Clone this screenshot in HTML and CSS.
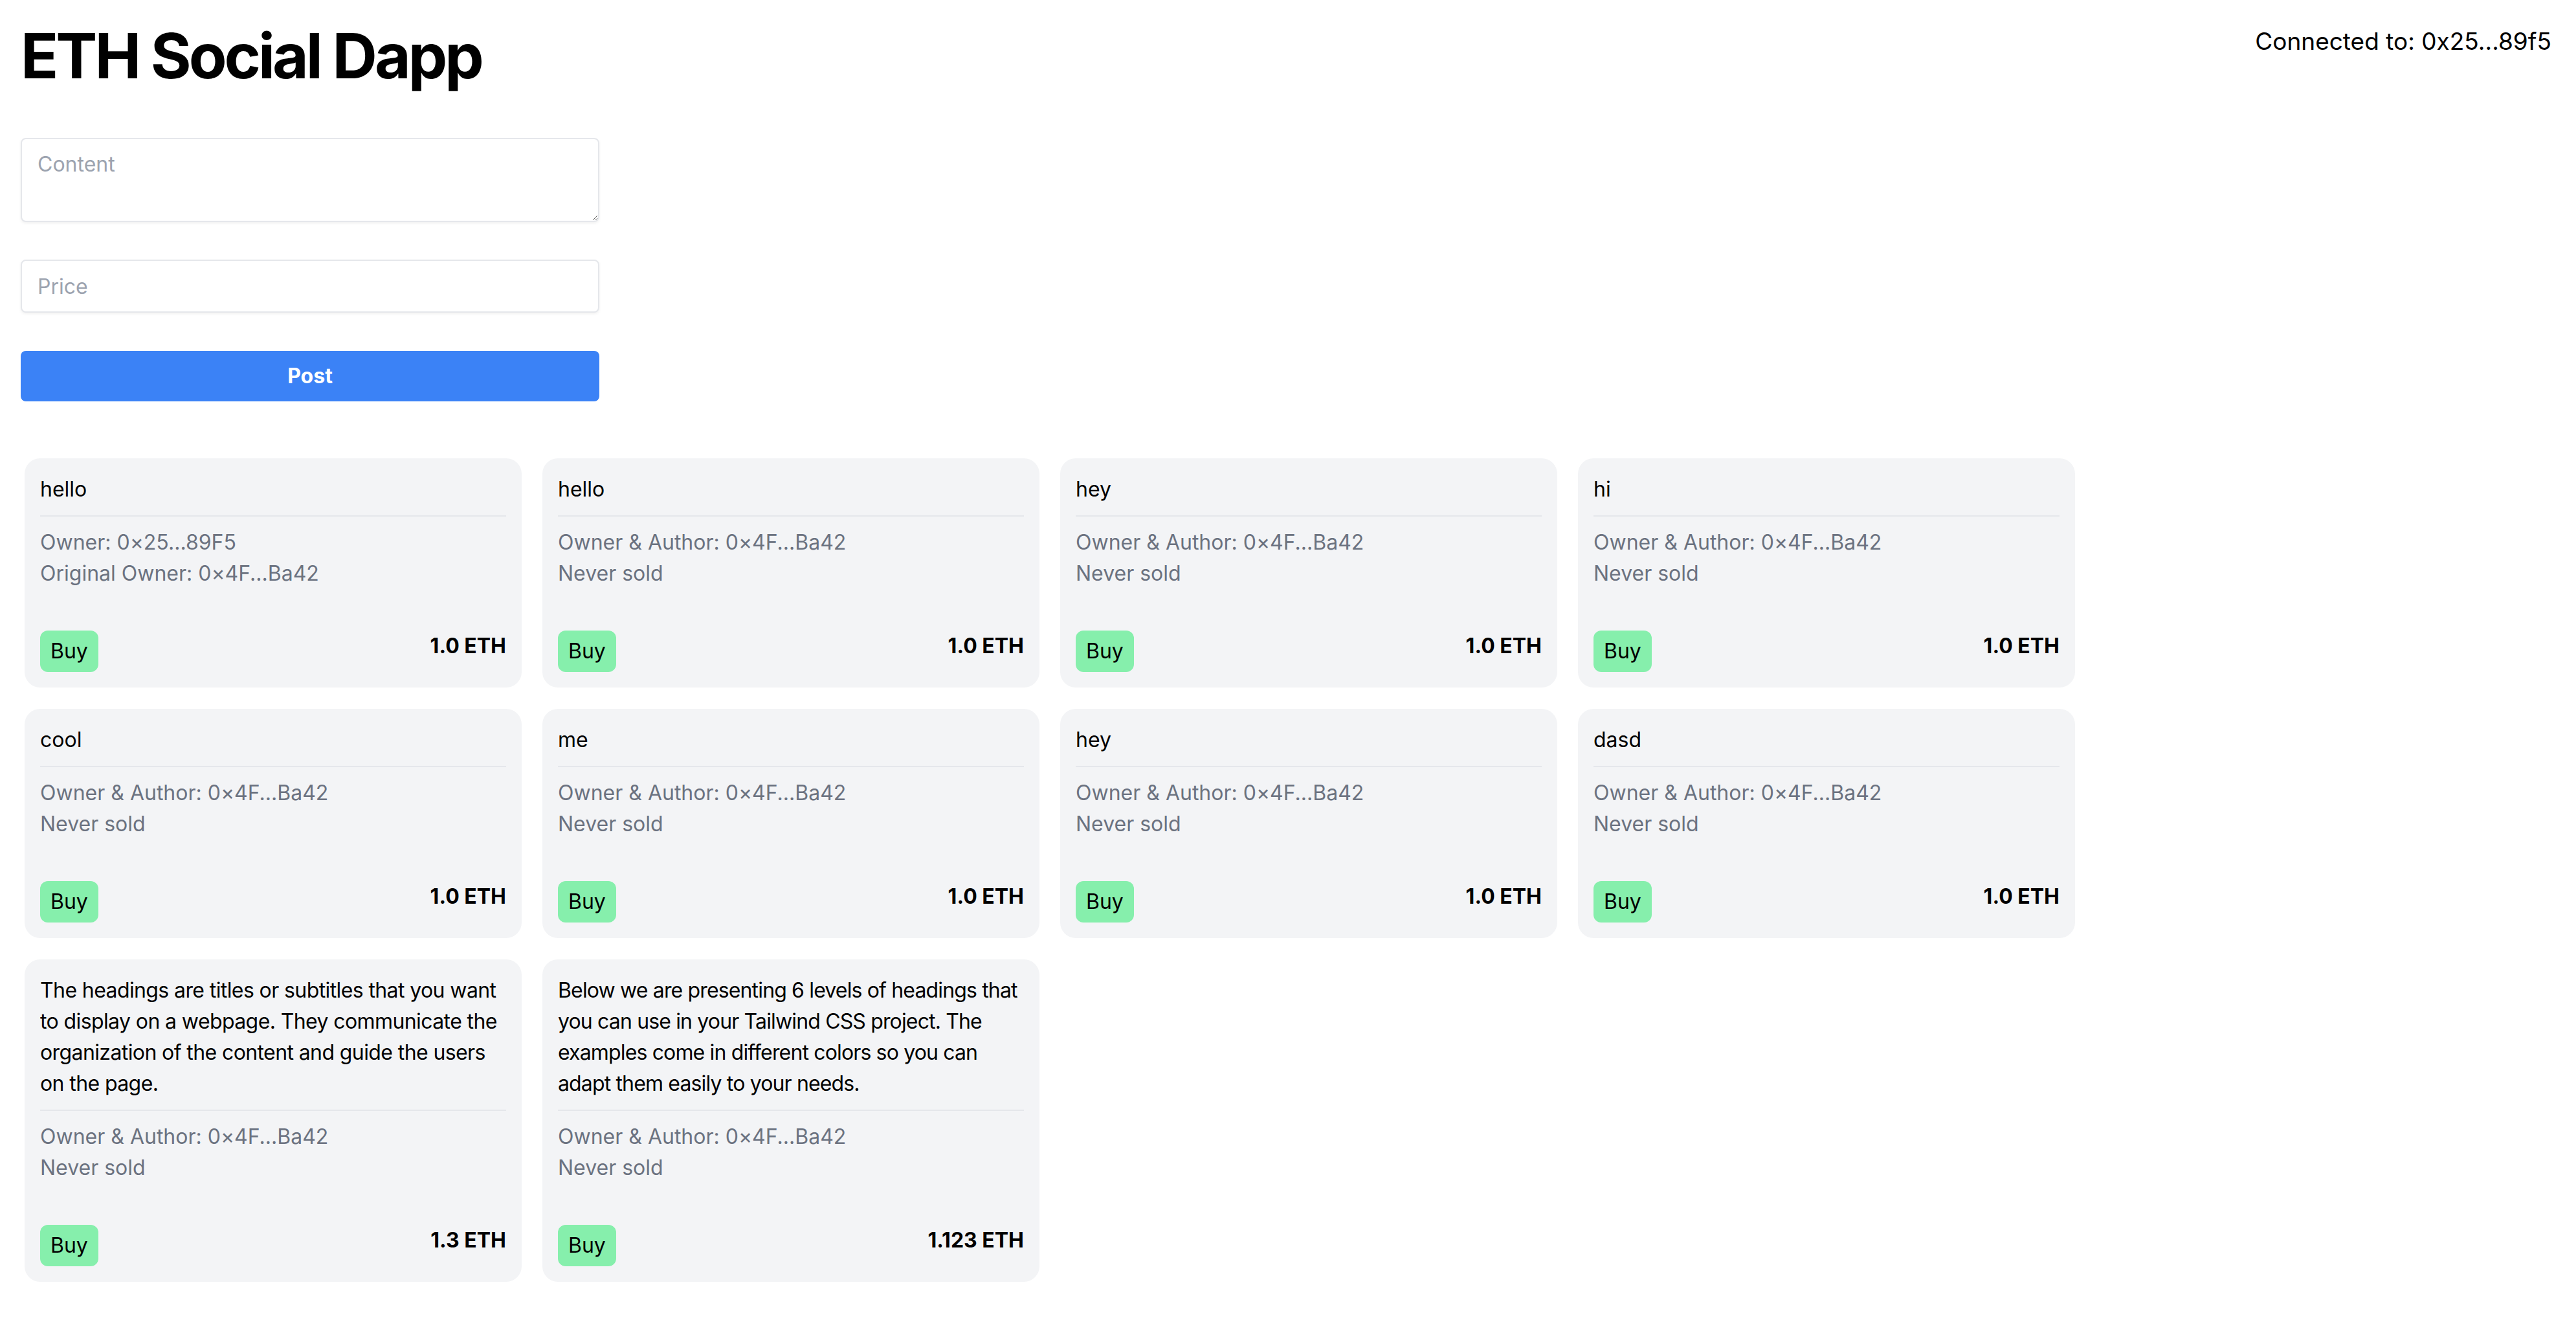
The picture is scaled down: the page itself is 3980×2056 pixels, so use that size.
FILE: index.html
```html
<!DOCTYPE html>
<html lang="en">
<head>
<meta charset="utf-8">
<title>ETH Social Dapp</title>
<link rel="stylesheet" href="styles.css">
</head>
<body>
<div class="app">
  <header class="header">
    <h1 class="title">ETH Social Dapp</h1>
    <div class="connected">Connected to: 0x25...89f5</div>
  </header>

  <form class="post-form">
    <textarea class="field field-area" placeholder="Content"></textarea>
    <input class="field field-input" type="text" placeholder="Price">
    <button class="post-btn" type="button">Post</button>
  </form>

  <section class="grid">
    <article class="card">
      <div class="card-content">hello</div>
      <div class="card-info">
        <div>Owner: 0×25...89F5</div>
        <div>Original Owner: 0×4F...Ba42</div>
      </div>
      <div class="card-footer">
        <button class="buy-btn" type="button">Buy</button>
        <span class="price">1.0 ETH</span>
      </div>
    </article>

    <article class="card">
      <div class="card-content">hello</div>
      <div class="card-info">
        <div>Owner &amp; Author: 0×4F...Ba42</div>
        <div>Never sold</div>
      </div>
      <div class="card-footer">
        <button class="buy-btn" type="button">Buy</button>
        <span class="price">1.0 ETH</span>
      </div>
    </article>

    <article class="card">
      <div class="card-content">hey</div>
      <div class="card-info">
        <div>Owner &amp; Author: 0×4F...Ba42</div>
        <div>Never sold</div>
      </div>
      <div class="card-footer">
        <button class="buy-btn" type="button">Buy</button>
        <span class="price">1.0 ETH</span>
      </div>
    </article>

    <article class="card">
      <div class="card-content">hi</div>
      <div class="card-info">
        <div>Owner &amp; Author: 0×4F...Ba42</div>
        <div>Never sold</div>
      </div>
      <div class="card-footer">
        <button class="buy-btn" type="button">Buy</button>
        <span class="price">1.0 ETH</span>
      </div>
    </article>

    <article class="card">
      <div class="card-content">cool</div>
      <div class="card-info">
        <div>Owner &amp; Author: 0×4F...Ba42</div>
        <div>Never sold</div>
      </div>
      <div class="card-footer">
        <button class="buy-btn" type="button">Buy</button>
        <span class="price">1.0 ETH</span>
      </div>
    </article>

    <article class="card">
      <div class="card-content">me</div>
      <div class="card-info">
        <div>Owner &amp; Author: 0×4F...Ba42</div>
        <div>Never sold</div>
      </div>
      <div class="card-footer">
        <button class="buy-btn" type="button">Buy</button>
        <span class="price">1.0 ETH</span>
      </div>
    </article>

    <article class="card">
      <div class="card-content">hey</div>
      <div class="card-info">
        <div>Owner &amp; Author: 0×4F...Ba42</div>
        <div>Never sold</div>
      </div>
      <div class="card-footer">
        <button class="buy-btn" type="button">Buy</button>
        <span class="price">1.0 ETH</span>
      </div>
    </article>

    <article class="card">
      <div class="card-content">dasd</div>
      <div class="card-info">
        <div>Owner &amp; Author: 0×4F...Ba42</div>
        <div>Never sold</div>
      </div>
      <div class="card-footer">
        <button class="buy-btn" type="button">Buy</button>
        <span class="price">1.0 ETH</span>
      </div>
    </article>

    <article class="card">
      <div class="card-content card-long">The headings are titles or subtitles that you want to display on a webpage. They communicate the organization of the content and guide the users on the page.</div>
      <div class="card-info">
        <div>Owner &amp; Author: 0×4F...Ba42</div>
        <div>Never sold</div>
      </div>
      <div class="card-footer">
        <button class="buy-btn" type="button">Buy</button>
        <span class="price">1.3 ETH</span>
      </div>
    </article>

    <article class="card">
      <div class="card-content card-long card-tight">Below we are presenting 6 levels of headings that you can use in your Tailwind CSS project. The examples come in different colors so you can adapt them easily to your needs.</div>
      <div class="card-info">
        <div>Owner &amp; Author: 0×4F...Ba42</div>
        <div>Never sold</div>
      </div>
      <div class="card-footer">
        <button class="buy-btn" type="button">Buy</button>
        <span class="price">1.123 ETH</span>
      </div>
    </article>
  </section>
</div>
</body>
</html>
```

FILE: styles.css
```css
* {
  box-sizing: border-box;
}

html, body {
  margin: 0;
  padding: 0;
  background: #ffffff;
}

body {
  font-family: Inter, "Noto Sans", "Liberation Sans", sans-serif;
  font-feature-settings: "calt" 0;
  color: #000000;
  font-size: 32px;
  line-height: 48px;
}

.app {
  padding: 38px 38px 40px 32px;
}

.header {
  display: flex;
  justify-content: space-between;
  align-items: flex-start;
}

.title {
  margin: 0;
  font-size: 96px;
  line-height: 96px;
  font-weight: 700;
  letter-spacing: -4px;
}

.connected {
  font-size: 37px;
  line-height: 56px;
  margin-top: -2px;
}

.post-form {
  display: flex;
  flex-direction: column;
  width: 894px;
  margin-top: 79px;
}

.field {
  display: block;
  width: 100%;
  font-family: inherit;
  font-size: 32px;
  line-height: 48px;
  padding: 15px 24px;
  border: 2px solid #e5e7eb;
  border-radius: 8px;
  box-shadow: 0 2px 4px rgba(0, 0, 0, 0.06);
  background: #ffffff;
  color: #111827;
  outline: none;
}

.field::placeholder {
  color: #9ca3af;
}

.field-area {
  height: 130px;
  resize: vertical;
}

.field-input {
  height: 82px;
  margin-top: 58px;
}

.post-btn {
  margin-top: 59px;
  height: 78px;
  border: none;
  border-radius: 8px;
  background: #3b82f6;
  color: #ffffff;
  font-family: inherit;
  font-size: 32px;
  line-height: 48px;
  font-weight: 700;
}

.grid {
  display: grid;
  grid-template-columns: repeat(4, 768px);
  column-gap: 32px;
  row-gap: 33px;
  align-items: start;
  margin-top: 88px;
  margin-left: 6px;
}

.card {
  display: flex;
  flex-direction: column;
  background: #f3f4f6;
  border-radius: 24px;
  padding: 24px;
}

.card-content {
  padding-bottom: 16px;
  border-bottom: 2px solid #e5e7eb;
  color: #000000;
}

.card-long {
  letter-spacing: -0.6px;
}

.card-tight {
  letter-spacing: -0.85px;
}

.card-info {
  margin-top: 16px;
  color: #6b7280;
}

.card-footer {
  display: flex;
  justify-content: space-between;
  align-items: flex-start;
  margin-top: 64px;
}

.buy-btn {
  border: none;
  border-radius: 12px;
  background: #86efac;
  color: #000000;
  font-family: inherit;
  font-size: 32px;
  line-height: 48px;
  padding: 8px 16px;
}

.price {
  font-weight: 700;
}
```
